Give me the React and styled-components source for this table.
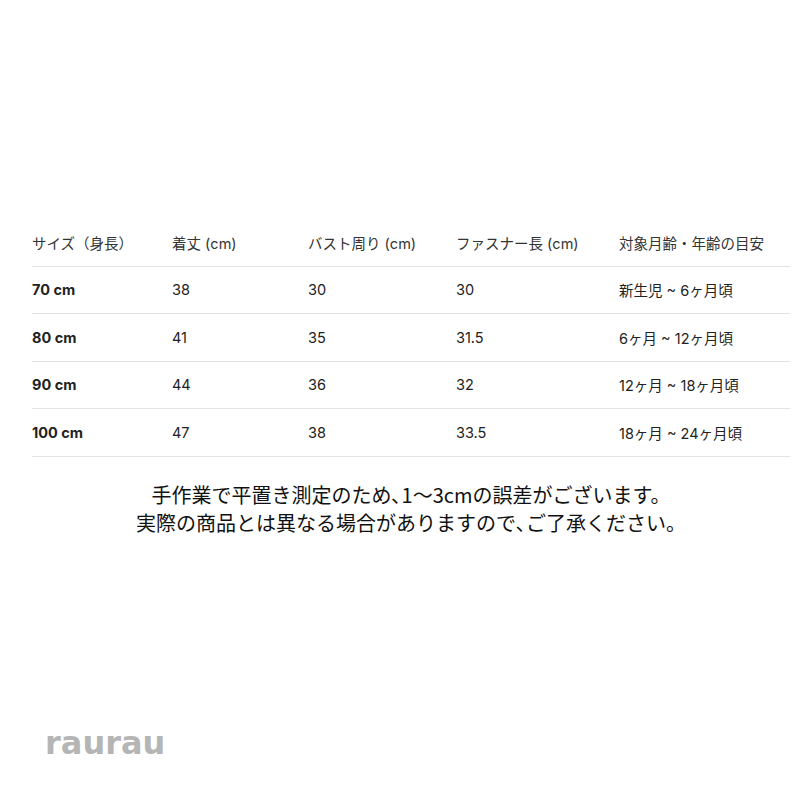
import React from 'react';
import styled, { createGlobalStyle } from 'styled-components';

const GlobalStyle = createGlobalStyle`
  html, body {
    margin: 0;
    padding: 0;
    background: #ffffff;
  }
  body {
    font-family: Inter, "Noto Sans CJK JP", sans-serif;
    color: #222;
  }
`;

const Page = styled.div`
  width: 812px;
  height: 812px;
  padding-top: 219px;
  box-sizing: border-box;
  display: flex;
  flex-direction: column;
`;

const Table = styled.div`
  margin-left: 32px;
  width: 758px;
  display: flex;
  flex-direction: column;
`;

const Row = styled.div`
  display: grid;
  grid-template-columns: 140px 136px 148px 163px 1fr;
  align-items: center;
  height: 46.5px;
  border-bottom: 1px solid #e3e3e3;
`;

const Cell = styled.div`
  font-size: 14.5px;
  font-weight: ${(p) => (p.$bold ? 700 : 400)};
  color: ${(p) => (p.$head ? '#333' : '#222')};
  white-space: nowrap;
`;

const Note = styled.div`
  margin-top: 24px;
  font-family: "Noto Sans CJK JP", sans-serif;
  font-size: 20px;
  line-height: 28px;
  text-align: center;
  color: #111;
  padding-left: 10px;
`;

const Mark = styled.div`
  margin-top: auto;
  margin-bottom: 50px;
  margin-left: 45px;
  font-family: "DejaVu Sans", sans-serif;
  font-weight: 700;
  font-size: 32px;
  color: #b5b5b5;
`;

const head = ['サイズ（身長）', '着丈 (cm)', 'バスト周り (cm)', 'ファスナー長 (cm)', '対象月齢・年齢の目安'];

const rows = [
  ['70 cm', '38', '30', '30', '新生児 ~ 6ヶ月頃'],
  ['80 cm', '41', '35', '31.5', '6ヶ月 ~ 12ヶ月頃'],
  ['90 cm', '44', '36', '32', '12ヶ月 ~ 18ヶ月頃'],
  ['100 cm', '47', '38', '33.5', '18ヶ月 ~ 24ヶ月頃'],
];

export default function App() {
  return (
    <Page>
      <GlobalStyle />
      <Table>
        <Row>
          {head.map((h) => (
            <Cell key={h} $head>{h}</Cell>
          ))}
        </Row>
        {rows.map((r) => (
          <Row key={r[0]}>
            {r.map((c, i) => (
              <Cell key={i} $bold={i === 0}>{c}</Cell>
            ))}
          </Row>
        ))}
      </Table>
      <Note>
        手作業で平置き測定のため､1〜3cmの誤差がございます。
        <br />
        実際の商品とは異なる場合がありますので､ご了承ください。
      </Note>
      <Mark>raurau</Mark>
    </Page>
  );
}
